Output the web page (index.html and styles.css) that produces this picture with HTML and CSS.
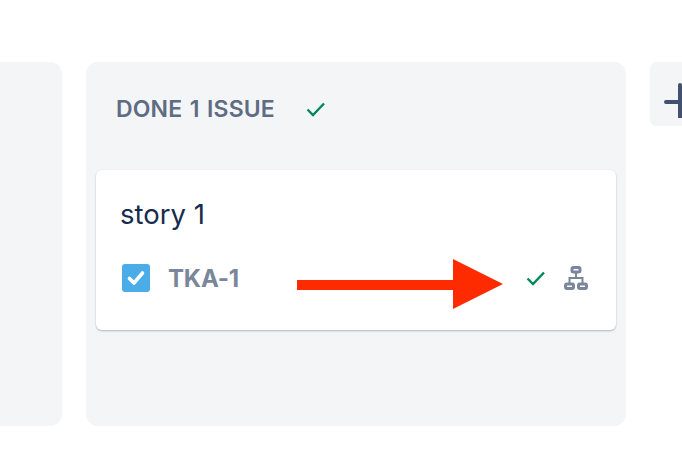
FILE: index.html
```html
<!DOCTYPE html>
<html>
<head>
  <title>Board</title>
  <meta charset="utf-8">
  <link rel="stylesheet" href="styles.css">
</head>
<body>
  <div class="board">
    <div class="column"></div>

    <div class="column">
      <div class="column-header">
        <span class="column-title">Done 1 issue</span>
        <svg class="check-icon" width="24" height="24" viewBox="0 0 24 24"><path d="M3.5 12.5l5.5 5.5L20 6.5" fill="none" stroke="#00875a" stroke-width="2.4"/></svg>
      </div>

      <div class="card">
        <div class="card-title">story 1</div>
        <div class="card-footer">
          <svg class="type-icon" width="28" height="28" viewBox="0 0 28 28">
            <rect width="28" height="28" rx="3" fill="#4bade8"/>
            <path d="M7.5 14.5l4.5 4.5 8.5-10" fill="none" stroke="#fff" stroke-width="3.6" stroke-linecap="round" stroke-linejoin="round"/>
          </svg>
          <span class="issue-key">TKA-1</span>
          <div class="card-icons">
            <svg class="check-icon" width="24" height="24" viewBox="0 0 24 24"><path d="M3.5 12.5l5.5 5.5L20 6.5" fill="none" stroke="#00875a" stroke-width="2.4"/></svg>
            <svg class="tree-icon" width="24" height="24" viewBox="0 0 24 24" fill="none" stroke="#7a869a" stroke-width="3">
              <rect x="8" y="1.5" width="8" height="4.5" rx="1.5"/>
              <rect x="1.5" y="18" width="8" height="4.5" rx="1.5"/>
              <rect x="14.5" y="18" width="8" height="4.5" rx="1.5"/>
              <path stroke-width="2" d="M12 6v6M5.5 18v-6h13v6"/>
            </svg>
          </div>
        </div>
      </div>
    </div>

    <button class="add-column">
      <svg width="48" height="48" viewBox="0 0 48 48"><path d="M16 32h32M30 15v34" fill="none" stroke="#42526e" stroke-width="4" stroke-linecap="round"/></svg>
    </button>
  </div>

  <svg class="arrow" width="206" height="50" viewBox="0 0 206 50"><path d="M0 21h156V0l50 25-50 25V31H0z" fill="#ff2b00"/></svg>
</body>
</html>
```

FILE: styles.css
```css
html, body {
  margin: 0;
  height: 100%;
  overflow: hidden;
  background: #ffffff;
}

body {
  position: relative;
  font-family: Inter, "Liberation Sans", sans-serif;
}

/* first column runs off the left edge of the window */
.board {
  display: flex;
  gap: 24px;
  align-items: flex-start;
  margin-left: -478px;
  padding-top: 62px;
}

.column {
  flex: none;
  width: 540px;
  height: 364px;
  box-sizing: border-box;
  padding: 0 10px;
  background: #f4f5f7;
  border-radius: 12px;
}

.column-header {
  display: flex;
  align-items: center;
  gap: 29px;
  height: 94px;
  padding: 0 20px;
}

.column-title {
  font-size: 23px;
  font-weight: 600;
  letter-spacing: 0.15px;
  word-spacing: 1.5px;
  color: #5e6c84;
  text-transform: uppercase;
}

.check-icon {
  flex: none;
}

.card {
  height: 160px;
  margin-top: 14px;
  box-sizing: border-box;
  padding: 28px 24px 0;
  background: #ffffff;
  border-radius: 6px;
  box-shadow: 0 1px 2px rgba(9, 30, 66, 0.3);
}

.card-title {
  font-size: 27.5px;
  line-height: 32px;
  color: #172b4d;
}

.card-footer {
  display: flex;
  align-items: center;
  margin-top: 34px;
  height: 28px;
}

.type-icon {
  flex: none;
  margin-left: 2px;
}

.issue-key {
  margin-left: 18px;
  font-size: 24px;
  font-weight: 700;
  letter-spacing: -0.2px;
  color: #7a869a;
}

.card-icons {
  display: flex;
  align-items: center;
  gap: 16px;
  margin-left: auto;
  margin-right: 4px;
}

.add-column {
  flex: none;
  width: 64px;
  height: 64px;
  padding: 0;
  border: none;
  background: #f4f5f7;
  border-radius: 6px;
  overflow: hidden;
}

.add-column svg {
  display: block;
}

/* annotation drawn over the card */
.arrow {
  position: absolute;
  left: 297px;
  top: 259px;
}
```
